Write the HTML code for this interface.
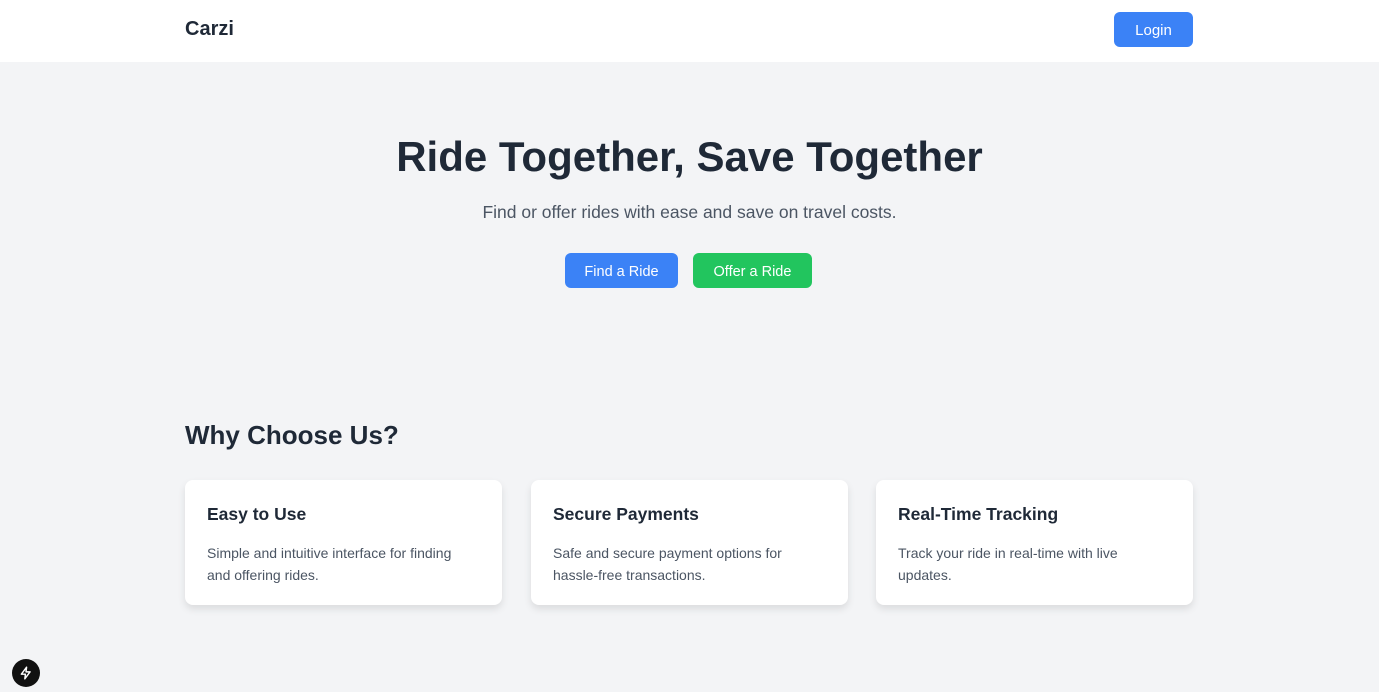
<!DOCTYPE html>
<html><head><style>
*{margin:0;padding:0;box-sizing:border-box}
body{width:1379px;height:692px;overflow:hidden;background:#f3f4f6;font-family:"Liberation Sans",sans-serif;color:#1f2937;position:relative}
header{height:62px;background:#fff;position:relative}
.logo{position:absolute;left:185px;top:18px;font-size:20px;font-weight:bold;color:#1f2937}
.login{position:absolute;left:1114px;top:12px;width:79px;height:35px;background:#3b82f6;color:#fff;border-radius:6px;font-size:15px;display:flex;align-items:center;justify-content:center;padding-top:2px}
h1{position:absolute;left:0;width:1379px;text-align:center;top:133px;font-size:42px;font-weight:bold;color:#1f2937}
.sub{position:absolute;left:0;width:1379px;text-align:center;top:202px;font-size:17.5px;color:#4b5563}
.btn{position:absolute;top:253px;height:35px;border-radius:6px;color:#fff;font-size:14.5px;display:flex;align-items:center;justify-content:center;padding-top:2px}
h2{position:absolute;left:185px;top:420px;font-size:26px;font-weight:bold}
.card{position:absolute;top:480px;width:317px;height:125px;background:#fff;border-radius:8px;box-shadow:0 4px 8px rgba(0,0,0,.1);padding:24px 22px}
.card h3{font-size:17.5px;font-weight:bold;margin-bottom:17px}
.card p{font-size:14px;line-height:22px;color:#4b5563;max-width:262px}
.bolt{position:absolute;left:12px;top:659px;width:28px;height:28px;border-radius:50%;background:#111;display:flex;align-items:center;justify-content:center}
</style></head><body>
<header><div class="logo">Carzi</div><div class="login">Login</div></header>
<h1>Ride Together, Save Together</h1>
<div class="sub">Find or offer rides with ease and save on travel costs.</div>
<div class="btn" style="left:565px;width:113px;background:#3b82f6">Find a Ride</div>
<div class="btn" style="left:693px;width:119px;background:#22c55e">Offer a Ride</div>
<h2>Why Choose Us?</h2>
<div class="card" style="left:185px"><h3>Easy to Use</h3><p>Simple and intuitive interface for finding and offering rides.</p></div>
<div class="card" style="left:531px"><h3>Secure Payments</h3><p>Safe and secure payment options for hassle-free transactions.</p></div>
<div class="card" style="left:876px"><h3>Real-Time Tracking</h3><p>Track your ride in real-time with live updates.</p></div>
<div class="bolt"><svg width="14" height="14" viewBox="0 0 24 24" fill="none" stroke="#fff" stroke-width="2.5" stroke-linejoin="round"><path d="M13 2L4 14h7l-1 8 9-12h-7z"/></svg></div>
</body></html>
